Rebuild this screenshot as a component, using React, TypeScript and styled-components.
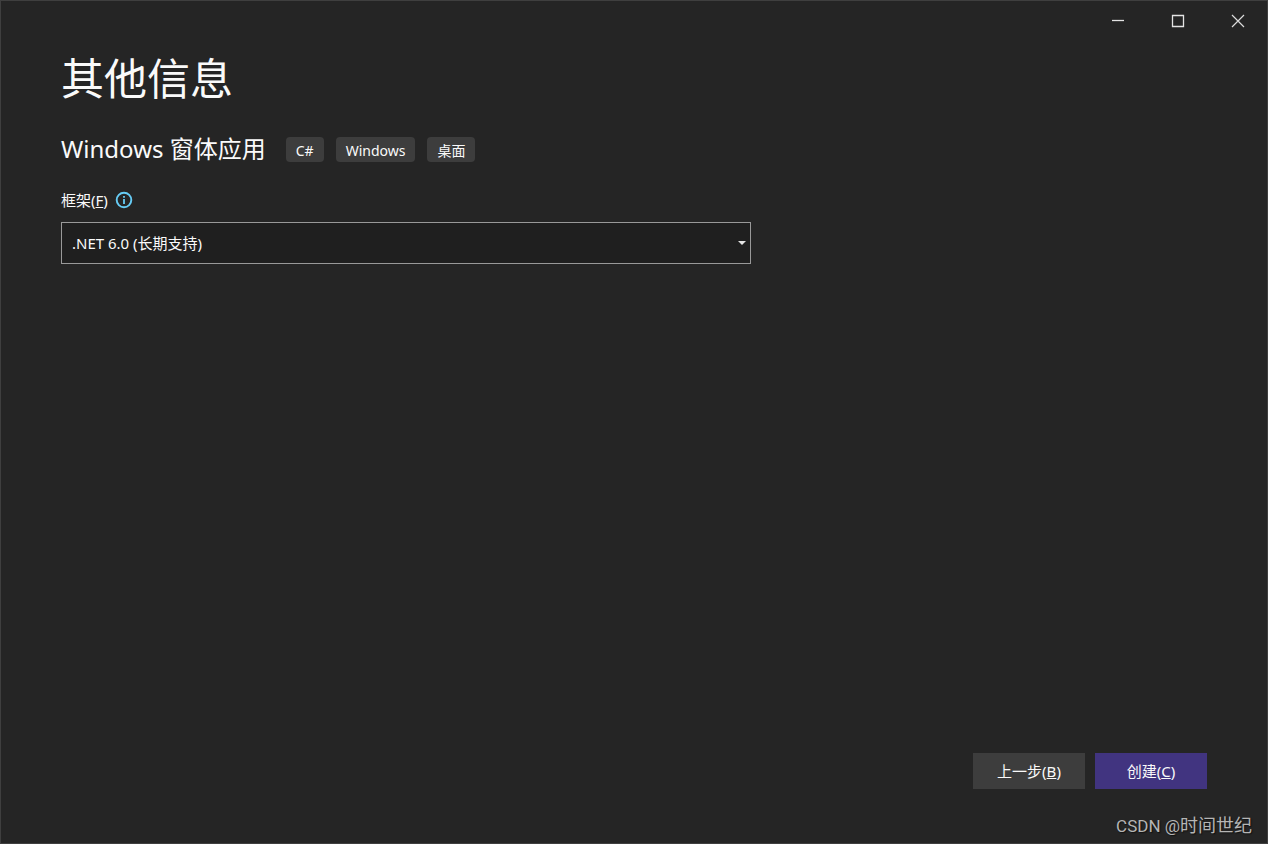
import React from "react";
import styled, { createGlobalStyle } from "styled-components";

const GlobalStyle = createGlobalStyle`
  * { box-sizing: border-box; }
  body {
    margin: 0;
    background: #252525;
    color: #fafafa;
    font-family: "Noto Sans", "Noto Sans CJK SC", sans-serif;
    font-size: 15px;
    line-height: 20px;
  }
  button, select { font: inherit; color: inherit; }
`;

const Window = styled.div`
  position: relative;
  display: flex;
  flex-direction: column;
  min-height: 100vh;
  border: 1px solid #3f3f3f;
`;

const TitleBar = styled.header`
  display: flex;
  justify-content: flex-end;
  height: 40px;
`;

const CaptionButton = styled.button`
  display: flex;
  align-items: center;
  justify-content: center;
  width: 60px;
  height: 40px;
  padding: 0 0 0 2px;
  border: 0;
  background: transparent;
`;

const Content = styled.main`
  flex: 1;
  padding: 6px 60px 0;
`;

const Title = styled.h1`
  margin: 0;
  font-size: 43px;
  line-height: 64px;
  font-weight: 400;
`;

const TemplateRow = styled.div`
  display: flex;
  align-items: center;
  margin-top: 22px;
`;

const TemplateName = styled.h2`
  margin: 0 20px 0 0;
  font-size: 24px;
  line-height: 32px;
  font-weight: 400;
`;

const Tags = styled.ul`
  display: flex;
  gap: 12px;
  margin: 0;
  padding: 0;
  list-style: none;
`;

const Tag = styled.li`
  height: 25px;
  padding: 0 10px;
  border-radius: 4px;
  background: #3d3d3d;
  font-size: 14px;
  line-height: 27px;
`;

const FieldHeader = styled.div`
  display: flex;
  align-items: center;
  gap: 7px;
  margin-top: 25px;
`;

const SelectBox = styled.div`
  display: grid;
  align-items: center;
  width: 100%;
  max-width: 690px;
  margin-top: 12px;
`;

const Select = styled.select`
  grid-area: 1 / 1;
  appearance: none;
  width: 100%;
  height: 42px;
  padding: 0 30px 0 10px;
  border: 1px solid #999999;
  border-radius: 0;
  background: #1f1f1f;
`;

const Arrow = styled.svg`
  grid-area: 1 / 1;
  justify-self: end;
  margin-right: 5px;
  pointer-events: none;
`;

const Footer = styled.footer`
  display: flex;
  justify-content: flex-end;
  gap: 10px;
  padding: 0 60px 54px;
`;

const ActionButton = styled.button<{ $primary?: boolean }>`
  width: 112px;
  height: 36px;
  padding: 0;
  border: 0;
  background: ${(p) => (p.$primary ? "#413480" : "#3d3d3d")};
`;

const Watermark = styled.div`
  position: absolute;
  right: 15px;
  bottom: 5px;
  color: #b5b5b5;
  font-family: Roboto, "Noto Sans CJK SC", sans-serif;
  font-size: 18px;
  line-height: 24px;
  text-shadow: 1px 1px 1px #111111;
`;

const SiteName = styled.span`
  font-size: 17px;
`;

const InfoIcon = () => (
  <svg width="18" height="18" viewBox="0 0 18 18" role="img" aria-label="信息">
    <circle cx="9" cy="9" r="7.3" fill="none" stroke="#66ccf5" strokeWidth="1.9" />
    <path d="M9 8v5M9 5v1.7" stroke="#66ccf5" strokeWidth="1.8" />
  </svg>
);

export default function App() {
  return (
    <>
      <GlobalStyle />
      <Window>
        <TitleBar>
          <CaptionButton aria-label="最小化">
            <svg width="14" height="14"><path d="M1 6.5h12" stroke="#e4e4e4" strokeWidth="1.3" /></svg>
          </CaptionButton>
          <CaptionButton aria-label="最大化">
            <svg width="14" height="14"><path d="M1.5 1.5h11v11h-11z" fill="none" stroke="#e4e4e4" strokeWidth="1.3" /></svg>
          </CaptionButton>
          <CaptionButton aria-label="关闭">
            <svg width="14" height="14"><path d="M1 1l12 12M13 1L1 13" stroke="#dcdcdc" strokeWidth="1.2" /></svg>
          </CaptionButton>
        </TitleBar>
        <Content>
          <Title>其他信息</Title>
          <TemplateRow>
            <TemplateName>Windows 窗体应用</TemplateName>
            <Tags>
              <Tag>C#</Tag>
              <Tag>Windows</Tag>
              <Tag>桌面</Tag>
            </Tags>
          </TemplateRow>
          <FieldHeader>
            <label htmlFor="framework">框架(<u>F</u>)</label>
            <InfoIcon />
          </FieldHeader>
          <SelectBox>
            <Select id="framework" defaultValue="net6">
              <option value="net6">.NET 6.0 (长期支持)</option>
            </Select>
            <Arrow width="8" height="4" viewBox="0 0 8 4" aria-hidden="true">
              <path d="M0 0h8L4 4z" fill="#e4e4e4" />
            </Arrow>
          </SelectBox>
        </Content>
        <Footer>
          <ActionButton>上一步(<u>B</u>)</ActionButton>
          <ActionButton $primary>创建(<u>C</u>)</ActionButton>
        </Footer>
        <Watermark><SiteName>CSDN @</SiteName>时间世纪</Watermark>
      </Window>
    </>
  );
}
